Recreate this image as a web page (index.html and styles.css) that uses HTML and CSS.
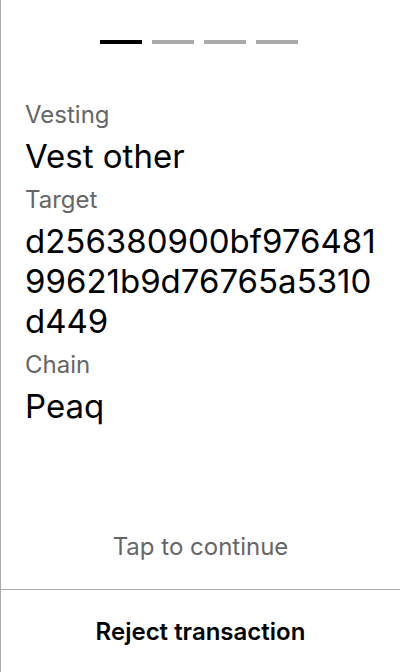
FILE: index.html
```html
<!DOCTYPE html>
<html>
<head>
<meta charset="utf-8">
<link rel="stylesheet" href="styles.css">
</head>
<body>
<div class="screen">
  <div class="progress">
    <span class="bar active"></span>
    <span class="bar"></span>
    <span class="bar"></span>
    <span class="bar"></span>
  </div>
  <div class="content">
    <div class="label">Vesting</div>
    <div class="value">Vest other</div>
    <div class="label">Target</div>
    <div class="value hex">d256380900bf97648199621b9d76765a5310d449</div>
    <div class="label">Chain</div>
    <div class="value">Peaq</div>
  </div>
  <div class="tap">Tap to continue</div>
  <div class="reject">Reject transaction</div>
</div>
</body>
</html>
```
FILE: styles.css
```css
html, body {
  margin: 0;
  padding: 0;
  background: #fff;
}
body {
  font-family: Inter, "Noto Sans", sans-serif;
  color: #000;
}
.screen {
  width: 400px;
  height: 672px;
  box-sizing: border-box;
  border-left: 1px solid #aaa;
  display: flex;
  flex-direction: column;
}
.progress {
  display: flex;
  gap: 10px;
  padding: 40px 0 0 99px;
}
.bar {
  width: 42px;
  height: 4px;
  background: #aaa;
}
.bar.active {
  background: #000;
}
.content {
  padding: 55px 16px 0 24px;
  flex: 1;
}
.label {
  font-size: 24px;
  line-height: 32px;
  color: #666;
  margin-top: 8px;
}
.label:first-child {
  margin-top: 0;
}
.value {
  font-size: 33px;
  line-height: 40px;
  margin-top: 5px;
  word-break: break-all;
}
.tap {
  text-align: center;
  font-size: 24px;
  line-height: 32px;
  color: #666;
  padding-bottom: 26px;
}
.reject {
  border-top: 1px solid #aaa;
  height: 82px;
  display: flex;
  align-items: center;
  justify-content: center;
  font-size: 24px;
  font-weight: 600;
}
```
